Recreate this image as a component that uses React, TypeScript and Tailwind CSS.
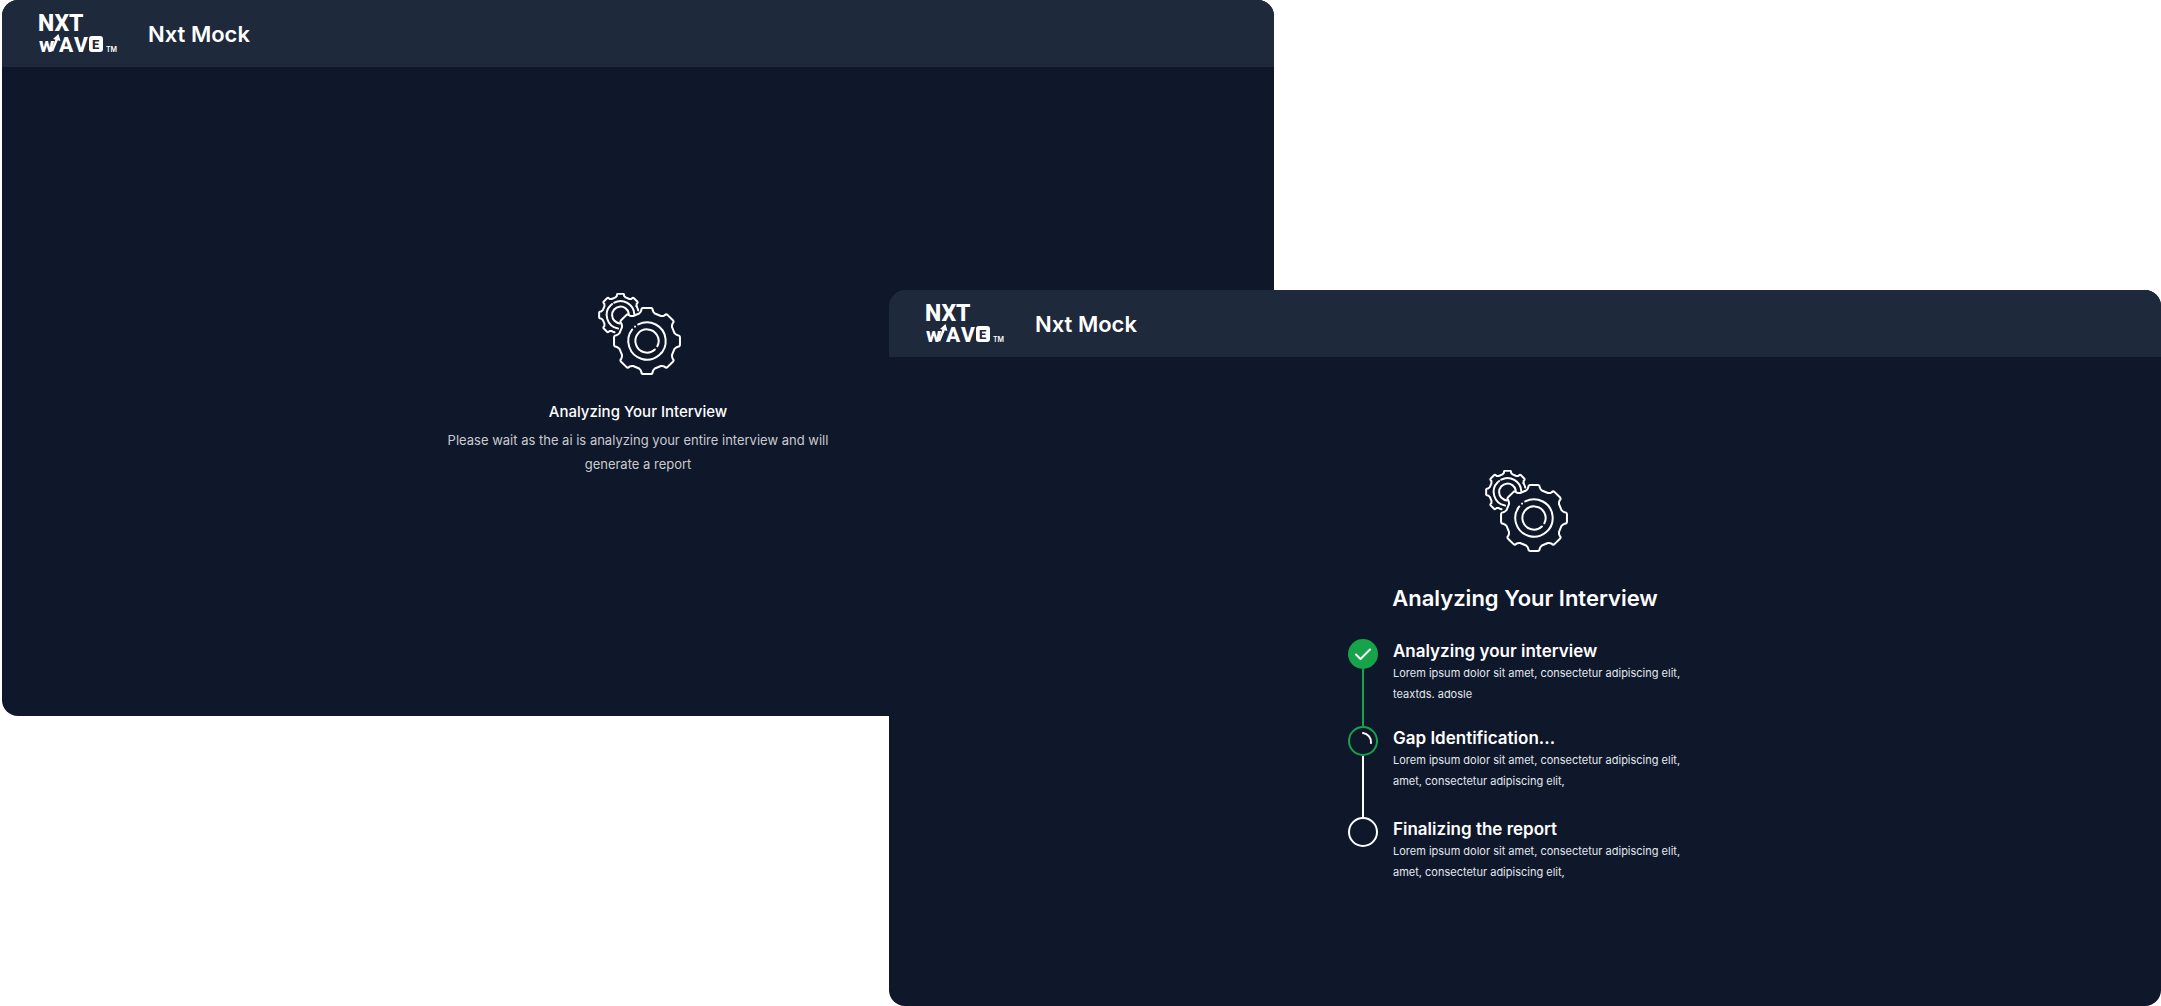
import type { ReactNode } from 'react'

const point = (cx: number, cy: number, r: number, deg: number) => {
  const a = (deg * Math.PI) / 180
  return `${(cx + r * Math.sin(a)).toFixed(2)} ${(cy - r * Math.cos(a)).toFixed(2)}`
}

/* Outline of an eight-toothed gear, drawn clockwise from tooth `first` to tooth `last`. */
const gear = (cx: number, cy: number, outer: number, inner: number, first = 0, last = 7) => {
  let d = ''
  for (let i = first; i <= last; i++) {
    const t = i * 45
    d += `${i === first ? 'M' : 'L'}${point(cx, cy, inner, t - 16)}`
    d += `Q${point(cx, cy, inner + 1, t - 12)} ${point(cx, cy, outer - 2, t - 10.5)}`
    d += `Q${point(cx, cy, outer, t - 10)} ${point(cx, cy, outer, t - 7)}`
    d += `L${point(cx, cy, outer, t + 7)}`
    d += `Q${point(cx, cy, outer, t + 10)} ${point(cx, cy, outer - 2, t + 10.5)}`
    d += `Q${point(cx, cy, inner + 1, t + 12)} ${point(cx, cy, inner, t + 16)}`
  }
  return d
}

const arc = (cx: number, cy: number, r: number, from: number, to: number) =>
  `M${point(cx, cy, r, from)}A${r} ${r} 0 ${to - from > 180 ? 1 : 0} 1 ${point(cx, cy, r, to)}`

function Gears() {
  return (
    <svg
      viewBox="0 0 84 84"
      className="ml-1 size-[84px]"
      fill="none"
      stroke="white"
      strokeWidth="2"
      strokeLinecap="round"
      strokeLinejoin="round"
      aria-hidden="true"
    >
      <path d={gear(22.5, 22, 21.5, 18.3, 5, 9)} />
      <path d={arc(22.5, 22, 18.3, 199, 209)} />
      <path d={arc(22.5, 22, 18.3, 61, 76)} />
      <path d={arc(22.5, 22, 13.8, 190, 316)} />
      <path d={arc(22.5, 22, 13.8, 322, 322.5)} />
      <path d={arc(22.5, 22, 13.8, 333, 446)} />
      <path d={arc(22.5, 22, 8.4, 184, 438)} />
      <path d={gear(49, 48, 33.2, 28.6) + 'Z'} />
      <path d={arc(49, 48, 18.7, -28, 308)} />
      <path d={arc(49, 48, 18.7, 320, 320.5)} />
      <path d={arc(49, 48, 11.6, 137, 477)} />
    </svg>
  )
}

function Logo() {
  return (
    <svg viewBox="0 -12 80 67" className="h-[67px] w-20 overflow-visible" fill="white" role="img" aria-label="NXT WAVE">
      <g fontFamily="Roboto, sans-serif" fontWeight="800">
        <text x="0" y="18" fontSize="23">NXT</text>
        <text x="1 21 36" y="39" fontSize="21">wAV</text>
      </g>
      <path d="M14 38L19 26" stroke="white" strokeWidth="2.5" />
      <path d="M15 26L20.5 21L22.5 28Z" />
      <rect x="51" y="23" width="14" height="16" rx="3" />
      <text x="54" y="36" fontSize="13" fontWeight="800" fontFamily="Roboto, sans-serif" fill="#1e293b">E</text>
      <text x="68" y="39" fontSize="7" fontWeight="600" fontFamily="Inter, sans-serif">TM</text>
    </svg>
  )
}

function Screen({ className, children }: { className: string; children: ReactNode }) {
  return (
    <section className={`row-start-1 flex aspect-video flex-col overflow-hidden rounded-2xl bg-[#0f172a] text-white ${className}`}>
      <header className="flex h-[67px] shrink-0 items-center gap-[30px] bg-[#1e293b] px-9 pt-px">
        <Logo />
        <h1 className="text-[22px] font-semibold">Nxt Mock</h1>
      </header>
      {children}
    </section>
  )
}

function Done() {
  return (
    <span className="flex size-[30px] items-center justify-center rounded-full bg-[#16a34a]">
      <svg viewBox="0 0 16 12" className="h-3 w-4" fill="none" stroke="white" strokeWidth="2" strokeLinecap="round" strokeLinejoin="round" aria-hidden="true">
        <path d="M1 6.5L5.5 11L15 1.5" />
      </svg>
    </span>
  )
}

function Active() {
  return (
    <span className="flex size-[30px] items-center justify-center rounded-full border-2 border-[#16a34a]">
      <svg viewBox="0 0 20 20" className="size-5" fill="none" stroke="white" strokeWidth="2" strokeLinecap="round" aria-hidden="true">
        <path d="M10 2A9 9 0 0 1 18 12" />
      </svg>
    </span>
  )
}

function Pending() {
  return <span className="size-[30px] rounded-full border-2 border-white" />
}

const steps = [
  { title: 'Analyzing your interview', lines: ['Lorem ipsum dolor sit amet, consectetur adipiscing elit,', 'teaxtds. adosle'], marker: <Done />, line: 'bg-[#16a34a]', space: 'pb-[21px]' },
  { title: 'Gap Identification...', lines: ['Lorem ipsum dolor sit amet, consectetur adipiscing elit,', 'amet, consectetur adipiscing elit,'], marker: <Active />, line: 'bg-white', space: 'pb-[25px]' },
  { title: 'Finalizing the report', lines: ['Lorem ipsum dolor sit amet, consectetur adipiscing elit,', 'amet, consectetur adipiscing elit,'], marker: <Pending />, line: '', space: '' },
]

export default function App() {
  return (
    <main className="grid grid-cols-[887fr_385fr_887fr] items-start bg-white pl-0.5 font-['Inter',sans-serif]">
      <Screen className="col-span-2 col-start-1">
        <div className="flex grow flex-col items-center pt-[226px] text-center">
          <Gears />
          <h2 className="mt-[23px] text-[15px] leading-6 font-medium">Analyzing Your Interview</h2>
          <p className="mt-1 w-[400px] text-[13px] leading-6 text-[#c9cbd0]">
            Please wait as the ai is analyzing your entire interview and will generate a report
          </p>
        </div>
      </Screen>
      <Screen className="col-span-2 col-start-2 mt-[290px]">
        <div className="flex grow flex-col items-center pt-[113px]">
          <Gears />
          <h2 className="mt-7 text-[22px] leading-8 font-semibold">Analyzing Your Interview</h2>
          <ol className="mt-[25px] w-[354px]">
            {steps.map((s) => (
              <li key={s.title} className="flex gap-[15px]">
                <div className="flex flex-col items-center">
                  {s.marker}
                  {s.line && <span className={`w-0.5 grow ${s.line}`} />}
                </div>
                <div className={s.space}>
                  <h3 className="text-[17px] leading-6 font-semibold">{s.title}</h3>
                  <p className="text-[11px] leading-[21px] text-[#e2e8f0]">
                    {s.lines[0]}
                    <br />
                    {s.lines[1]}
                  </p>
                </div>
              </li>
            ))}
          </ol>
        </div>
      </Screen>
    </main>
  )
}
